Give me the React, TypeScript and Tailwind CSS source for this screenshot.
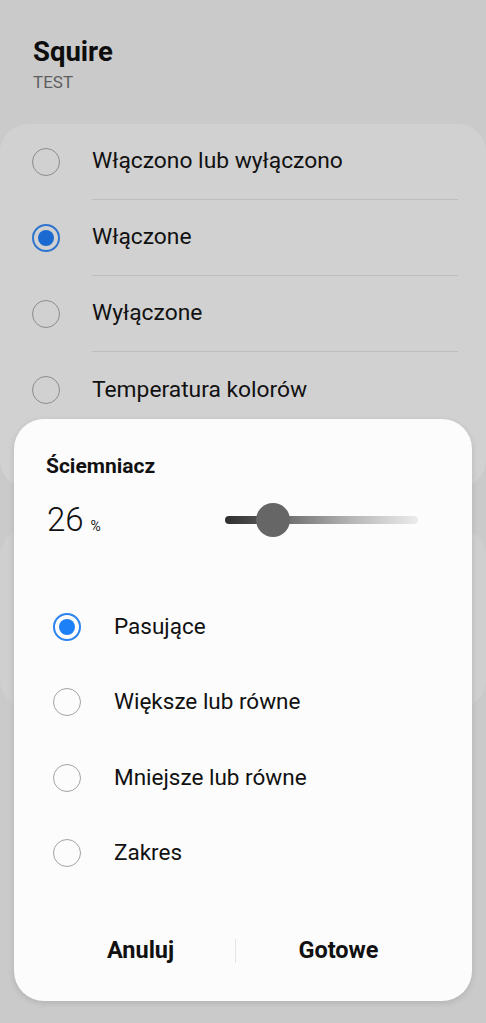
import React from "react";

const font = { fontFamily: "Roboto, 'Noto Sans', sans-serif" };

function Radio({ checked, dim }: { checked: boolean; dim?: boolean }) {
  if (checked) {
    return (
      <div className={`flex h-[28px] w-[28px] items-center justify-center rounded-full border-2 ${dim ? "border-[#2f74cf]" : "border-[#2b84f0]"}`}>
        <div className={`h-[16px] w-[16px] rounded-full ${dim ? "bg-[#1a6ad2]" : "bg-[#1e80f6]"}`} />
      </div>
    );
  }
  return <div className={`h-[28px] w-[28px] rounded-full border-[1.5px] ${dim ? "border-[#8c8c8c]" : "border-[#a3a3a3]"}`} />;
}

const bgItems = [
  { label: "Włączono lub wyłączono", checked: false },
  { label: "Włączone", checked: true },
  { label: "Wyłączone", checked: false },
  { label: "Temperatura kolorów", checked: false },
];

const dlgItems = [
  { label: "Pasujące", checked: true },
  { label: "Większe lub równe", checked: false },
  { label: "Mniejsze lub równe", checked: false },
  { label: "Zakres", checked: false },
];

export default function App() {
  return (
    <div className="relative h-[1023px] w-[486px] overflow-hidden bg-[#cacaca]" style={font}>
      {/* background content */}
      <div className="px-[33px] pt-[35px]">
        <div className="text-[27.5px] font-bold leading-[34px] text-[#0d0d0d]">Squire</div>
        <div className="mt-[2px] text-[17px] leading-[22px] text-[#5e5e5e]">TEST</div>
      </div>
      <div className="mt-[31px] flex flex-col rounded-[28px] bg-[#d1d1d1] pb-[60px]">
        {bgItems.map((it, i) => (
          <div key={i} className="flex h-[76px] items-center">
            <div className="flex w-[92px] justify-center">
              <Radio checked={it.checked} dim />
            </div>
            <div className={`mr-[28px] flex h-full flex-1 items-center ${i < bgItems.length - 1 ? "border-b border-[#bdbdbd]" : ""}`}>
              <span className="text-[22.8px] text-[#111]">{it.label}</span>
            </div>
          </div>
        ))}
      </div>
      <div className="mt-[40px] h-[180px] rounded-[28px] bg-[#cfcfcf]" />

      {/* dialog */}
      <div className="absolute left-[14px] right-[14px] top-[419px] flex h-[582px] flex-col rounded-[30px] bg-[#fcfcfc] shadow-[0_2px_6px_rgba(0,0,0,0.12)]">
        <div className="pl-[32px] pt-[33px] text-[21px] font-bold leading-[28px] text-[#111]">Ściemniacz</div>
        <div className="mt-[20px] flex h-[40px] items-center pl-[33px] pr-[54px]">
          <div className="flex w-[178px] items-baseline">
            <span className="text-[33px] font-light leading-[40px] text-[#111]">26</span>
            <span className="ml-[7px] text-[14px] text-[#222]">%</span>
          </div>
          <div className="relative flex h-[40px] flex-1 items-center">
            <div className="h-[8px] w-full rounded-full bg-[linear-gradient(to_right,#2e2e2e,#6a6a6a_30%,#b5b5b5_65%,#ececec)]" />
            <div className="absolute left-[31px] top-[3px] h-[34px] w-[34px] rounded-full bg-[#666666]" />
          </div>
        </div>
        <div className="mt-[49px] flex flex-col">
          {dlgItems.map((it, i) => (
            <div key={i} className="flex h-[75.5px] items-center">
              <div className="ml-[39px] mr-[33px]">
                <Radio checked={it.checked} />
              </div>
              <span className="text-[22.5px] text-[#111]">{it.label}</span>
            </div>
          ))}
        </div>
        <div className="mt-[40px] flex h-[40px] items-center">
          <div className="flex w-[221px] justify-center pl-[32px]">
            <span className="text-[23.5px] font-bold text-[#111]">Anuluj</span>
          </div>
          <div className="h-[24px] w-px bg-[#e4e4e4]" />
          <div className="flex flex-1 justify-center pr-[31px]">
            <span className="text-[23.5px] font-bold text-[#111]">Gotowe</span>
          </div>
        </div>
      </div>
    </div>
  );
}
